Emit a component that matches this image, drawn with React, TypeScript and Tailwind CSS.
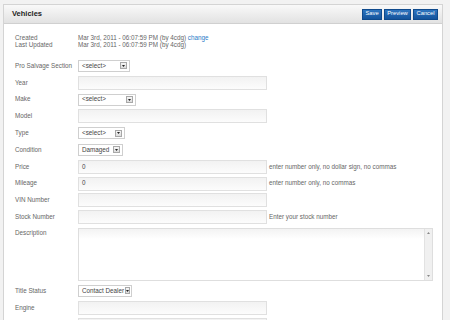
import React from "react";

const font = { fontFamily: '"Liberation Sans", Arial, sans-serif' };

function Tri({ down = true, color = "#222" }: { down?: boolean; color?: string }) {
  return (
    <svg width="3" height="2" viewBox="0 0 3 2" className="block">
      <path d={down ? "M0 0 L3 0 L1.5 2 Z" : "M0 2 L3 2 L1.5 0 Z"} fill={color} />
    </svg>
  );
}

function Select({ w, text }: { w: number; text: string }) {
  return (
    <div
      className="flex items-center h-[12px] border border-[#cfcfcf] bg-white pl-[3px] pr-[2px] whitespace-nowrap"
      style={{ width: w }}
    >
      <span className="flex-1 text-[6.3px] text-[#444] leading-none">{text}</span>
      <div className="ml-[1px] w-[7px] h-[7px] border border-[#a8a8a8] bg-gradient-to-b from-[#f6f6f6] to-[#dcdcdc] flex items-center justify-center">
        <Tri />
      </div>
    </div>
  );
}

function Input({ value }: { value?: string }) {
  return (
    <div className="w-[189px] h-[14px] border border-[#e0e0e0] bg-gradient-to-b from-[#f2f2f2] to-[#fcfcfc] flex items-center pl-[3px] text-[6.3px] text-[#444] leading-none">
      {value}
    </div>
  );
}

function Row({ label, children, help }: { label: string; children?: React.ReactNode; help?: string }) {
  return (
    <div className="flex items-center h-[16.8px]">
      <div className="w-[63px] text-[6.3px] text-[#666] leading-none">{label}</div>
      {children}
      {help && <div className="ml-[2px] text-[6.3px] text-[#666] leading-none">{help}</div>}
    </div>
  );
}

function Btn({ w, label }: { w: number; label: string }) {
  return (
    <div
      className="h-[11px] bg-gradient-to-b from-[#2d74bf] to-[#14549c] border border-[#0f4a8c] text-white text-[5.8px] leading-none flex items-center justify-center"
      style={{ width: w }}
    >
      {label}
    </div>
  );
}

export default function App() {
  return (
    <div className="w-[450px] h-[320px] overflow-hidden bg-[#f2f2f2] pt-[4px] pl-[3px] pr-[7px]" style={font}>
      <div className="h-[330px] bg-white border-l border-r border-t border-[#d4d4d4]">
        <div className="h-[19px] bg-gradient-to-b from-[#f9f9f9] to-[#e2e2e2] border-b border-[#d0d0d0] flex items-center pl-[8px] pr-[4px]">
          <div className="flex-1 text-[7.5px] font-bold text-[#222] leading-none">Vehicles</div>
          <div className="flex gap-[2px]">
            <Btn w={20} label="Save" />
            <Btn w={27} label="Preview" />
            <Btn w={25} label="Cancel" />
          </div>
        </div>
        <div className="pl-[11px] pt-[11px]">
          <div className="flex h-[6.8px] items-center">
            <div className="w-[63px] text-[6.3px] text-[#666] leading-none">Created</div>
            <div className="text-[6.3px] text-[#666] leading-none">
              Mar 3rd, 2011 - 06:07:59 PM (by 4cdg) <span className="text-[#2a7bc7]">change</span>
            </div>
          </div>
          <div className="flex h-[6.8px] items-center">
            <div className="w-[63px] text-[6.3px] text-[#666] leading-none">Last Updated</div>
            <div className="text-[6.3px] text-[#666] leading-none">Mar 3rd, 2011 - 06:07:59 PM (by 4cdg)</div>
          </div>
          <div className="mt-[9px]">
            <Row label="Pro Salvage Section"><Select w={52} text="<select>" /></Row>
            <Row label="Year"><Input /></Row>
            <Row label="Make"><Select w={58} text="<select>" /></Row>
            <Row label="Model"><Input /></Row>
            <Row label="Type"><Select w={47} text="<select>" /></Row>
            <Row label="Condition"><Select w={45} text="Damaged" /></Row>
            <Row label="Price" help="enter number only, no dollar sign, no commas"><Input value="0" /></Row>
            <Row label="Mileage" help="enter number only, no commas"><Input value="0" /></Row>
            <Row label="VIN Number"><Input /></Row>
            <Row label="Stock Number" help="Enter your stock number"><Input /></Row>
            <div className="flex mt-[2px]">
              <div className="w-[63px] text-[6.3px] text-[#666] leading-none pt-[2px]">Description</div>
              <div className="w-[355px] h-[53px] border border-[#dedede] bg-gradient-to-b from-[#f3f3f3] to-white to-[20%] flex">
                <div className="flex-1" />
                <div className="w-[8px] bg-[#f0f0f0] border-l border-[#e2e2e2] flex flex-col items-center justify-between py-[3px]">
                  <Tri down={false} color="#888" />
                  <Tri color="#888" />
                </div>
              </div>
            </div>
            <div className="mt-[2px]">
              <Row label="Title Status"><Select w={54} text="Contact Dealer" /></Row>
              <Row label="Engine"><Input /></Row>
              <Row label=""><Input /></Row>
            </div>
          </div>
        </div>
      </div>
    </div>
  );
}
